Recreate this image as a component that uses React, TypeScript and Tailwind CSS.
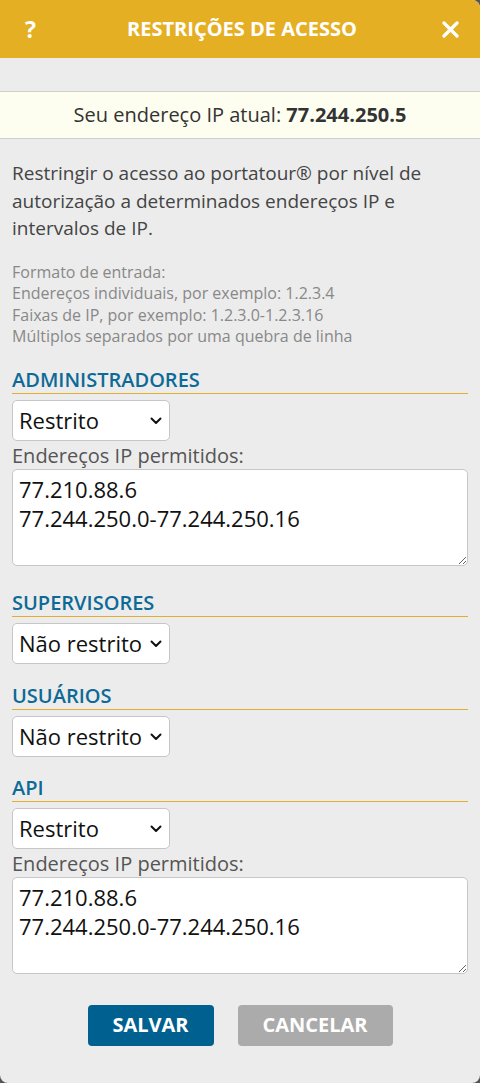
const Chevron = () => (
  <svg width="12" height="8" viewBox="0 0 12 8" className="pointer-events-none absolute right-[8px] top-[17px]">
    <path d="M1.5 1.5 L6 6 L10.5 1.5" fill="none" stroke="#111" strokeWidth="2" strokeLinecap="round" strokeLinejoin="round" />
  </svg>
)

const SelectBox = ({ value }: { value: string }) => (
  <div className="relative w-[158px] h-[41px] mt-[6px]">
    <select
      defaultValue={value}
      className="appearance-none w-full h-full bg-white border border-[#c6c6c6] rounded-[5px] pl-[6px] text-[22px] text-[#111] outline-none"
    >
      <option>Restrito</option>
      <option>Não restrito</option>
    </select>
    <Chevron />
  </div>
)

const Heading = ({ title, className }: { title: string; className: string }) => (
  <h3 className={`text-[20px] font-semibold text-[#0d6a97] leading-[26px] border-b border-[#e2ae32] ${className}`}>
    {title}
  </h3>
)

const IpArea = () => (
  <>
    <label className="block text-[20px] text-[#555] leading-[24px] mt-[3px]">Endereços IP permitidos:</label>
    <textarea
      defaultValue={"77.210.88.6\n77.244.250.0-77.244.250.16"}
      className="block w-full h-[97px] mt-[1px] bg-white border border-[#c6c6c6] rounded-[5px] px-[6px] py-[5px] text-[22px] leading-[29px] text-[#111] outline-none resize-y"
    />
  </>
)

export default function App() {
  return (
    <div className="min-h-screen bg-[#555]" style={{ fontFamily: '"Open Sans", sans-serif' }}>
      <div className="w-[480px] h-[1083px] bg-[#ececec] rounded-tr-[8px] rounded-b-[8px] overflow-hidden flex flex-col">
        <div className="h-[58px] bg-[#e5af23] flex items-center justify-between pl-[25px] pr-[21px]">
          <span className="text-white text-[23px] font-bold w-[17px]">?</span>
          <h2 className="text-white text-[20px] font-bold">RESTRIÇÕES DE ACESSO</h2>
          <svg width="17" height="17" viewBox="0 0 17 17">
            <path d="M2 2 L15 15 M15 2 L2 15" stroke="#fff" strokeWidth="3.2" strokeLinecap="round" />
          </svg>
        </div>

        <div className="mt-[33px] h-[48px] bg-[#fefef0] border-y border-[#cfcfcf] flex items-center justify-center text-[20px] text-[#333]">
          Seu endereço IP atual:&nbsp;<b className="font-bold">77.244.250.5</b>
        </div>

        <div className="px-[12px]">
          <p className="mt-[21px] text-[19px] leading-[27.5px] text-[#444]">
            Restringir o acesso ao portatour® por nível de autorização a determinados endereços IP e intervalos de IP.
          </p>
          <div className="mt-[19px] text-[16px] leading-[21.5px] text-[#888]">
            <p>Formato de entrada:</p>
            <p>Endereços individuais, por exemplo: 1.2.3.4</p>
            <p>Faixas de IP, por exemplo: 1.2.3.0-1.2.3.16</p>
            <p>Múltiplos separados por uma quebra de linha</p>
          </div>

          <section>
            <Heading title="ADMINISTRADORES" className="mt-[19px]" />
            <SelectBox value="Restrito" />
            <IpArea />
          </section>

          <section>
            <Heading title="SUPERVISORES" className="mt-[24px]" />
            <SelectBox value="Não restrito" />
          </section>

          <section>
            <Heading title="USUÁRIOS" className="mt-[19px]" />
            <SelectBox value="Não restrito" />
          </section>

          <section>
            <Heading title="API" className="mt-[18px]" />
            <SelectBox value="Restrito" />
            <IpArea />
          </section>

          <div className="mt-[31px] flex justify-center gap-[24px]">
            <button className="w-[126px] h-[41px] bg-[#006190] rounded-[4px] text-white text-[20px] font-bold">SALVAR</button>
            <button className="w-[155px] h-[41px] bg-[#ababab] rounded-[4px] text-white text-[20px] font-bold">CANCELAR</button>
          </div>
        </div>
      </div>
    </div>
  )
}
